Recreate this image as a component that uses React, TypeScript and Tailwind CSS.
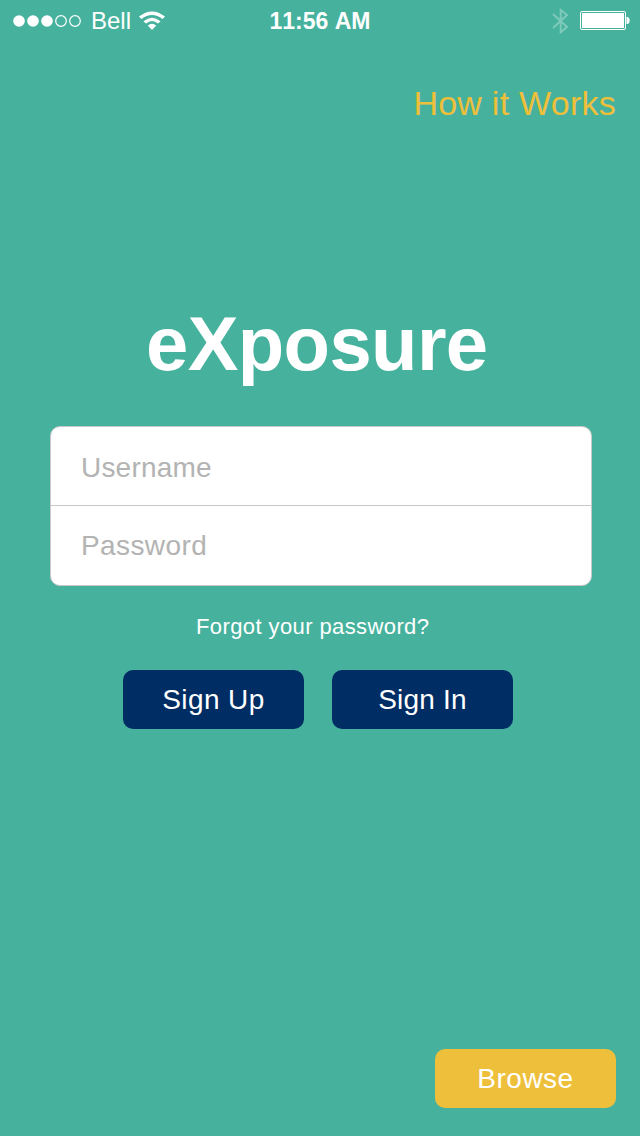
import type { ReactNode } from "react";

function StatusBar() {
  return (
    <header className="grid h-[42px] grid-cols-3 items-center pl-3 pr-[10px] text-white">
      <div className="flex items-center">
        <svg width="70" height="14" viewBox="0 0 70 14" className="shrink-0">
          <circle cx="7" cy="7" r="5.8" fill="white" />
          <circle cx="21" cy="7" r="5.8" fill="white" />
          <circle cx="35" cy="7" r="5.8" fill="white" />
          <circle cx="49" cy="7" r="5.3" fill="none" stroke="white" strokeWidth="1.2" />
          <circle cx="63" cy="7" r="5.3" fill="none" stroke="white" strokeWidth="1.2" />
        </svg>
        <span className="ml-[9px] text-[24px] leading-10">Bell</span>
        <svg width="28" height="20" viewBox="0 0 28 20" className="ml-[7px] shrink-0">
          <path d="M1 5.6Q14-4.8 27 5.6L24.6 8Q14-.2 3.4 8Z" fill="white" />
          <path d="M5.5 10.2Q14 3.2 22.5 10.2L20.1 12.6Q14 7.4 7.9 12.6Z" fill="white" />
          <path d="M9.8 14.6Q14 11 18.2 14.6L14 19Z" fill="white" />
        </svg>
      </div>
      <span className="ml-[-2px] text-center text-[23px] font-bold leading-10 [font-kerning:none]">11:56 AM</span>
      <div className="flex items-center justify-end">
        <svg width="18" height="26" viewBox="0 0 18 26" className="mr-[10px] shrink-0">
          <path
            d="M1 6L15 19L8.7 24.3V2L15 7L1 20"
            fill="none"
            stroke="white"
            strokeOpacity="0.3"
            strokeWidth="2"
          />
        </svg>
        <svg width="50" height="20" viewBox="0 0 50 20" className="shrink-0">
          <rect x=".5" y=".5" width="45" height="18" rx="1.5" fill="none" stroke="white" />
          <rect x="2" y="2" width="42" height="15" fill="white" />
          <path d="M46.5 6h1.2q2 .8 2 3.5t-2 3.5h-1.2z" fill="white" />
        </svg>
      </div>
    </header>
  );
}

function Button({ className, children }: { className: string; children: ReactNode }) {
  return (
    <button
      type="button"
      className={`h-[59px] w-[181px] rounded-[10px] text-[28px] leading-[59px] text-white ${className}`}
    >
      {children}
    </button>
  );
}

export default function App() {
  return (
    <main className="flex h-[1136px] w-[640px] flex-col overflow-hidden bg-[#46b29d] font-['Liberation_Sans',Arial,sans-serif]">
      <StatusBar />
      <a href="#how" className="mr-6 mt-[41px] self-end text-[34px] leading-10 tracking-[0.25px] text-[#eebf3a]">
        How it Works
      </a>
      <h1 className="ml-[146px] mt-[177px] text-[76px] font-bold leading-[88px] tracking-[-0.6px] text-white">
        eXposure
      </h1>
      <form className="ml-[50px] mt-[38px] flex h-[160px] w-[542px] flex-col overflow-hidden rounded-[10px] border border-[#c8c8c8] bg-white">
        <input
          aria-label="Username"
          placeholder="Username"
          className="h-[79px] border-b border-[#c8c8c8] pl-[30px] pt-1 text-[28px] tracking-[0.2px] text-gray-800 outline-none placeholder:text-[#b3b3b3]"
        />
        <input
          aria-label="Password"
          type="password"
          placeholder="Password"
          className="h-[79px] pl-[30px] text-[28px] tracking-[0.4px] text-gray-800 outline-none placeholder:text-[#b3b3b3]"
        />
      </form>
      <a href="#forgot" className="ml-[196px] mt-[26px] self-start text-[22px] leading-[30px] tracking-[0.4px] text-white">
        Forgot your password?
      </a>
      <div className="ml-[123px] mt-7 flex gap-7">
        <Button className="bg-[#002d64] tracking-[0.4px]">Sign Up</Button>
        <Button className="bg-[#002d64] tracking-[0.2px]">Sign In</Button>
      </div>
      <div className="mb-7 mr-6 mt-auto flex justify-end">
        <Button className="bg-[#eebf3a] tracking-[0.5px]">Browse</Button>
      </div>
    </main>
  );
}
